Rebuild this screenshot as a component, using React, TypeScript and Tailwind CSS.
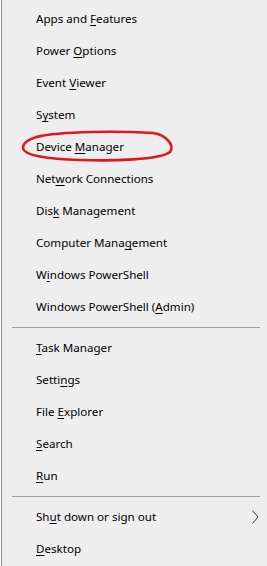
import React from 'react';

type Item = { pre: string; key: string; post: string; submenu?: boolean };

const groups: Item[][] = [
  [
    { pre: 'Apps and ', key: 'F', post: 'eatures' },
    { pre: 'Power ', key: 'O', post: 'ptions' },
    { pre: 'Event ', key: 'V', post: 'iewer' },
    { pre: 'S', key: 'y', post: 'stem' },
    { pre: 'Device ', key: 'M', post: 'anager' },
    { pre: 'Net', key: 'w', post: 'ork Connections' },
    { pre: 'Dis', key: 'k', post: ' Management' },
    { pre: 'Computer Mana', key: 'g', post: 'ement' },
    { pre: 'W', key: 'i', post: 'ndows PowerShell' },
    { pre: 'Windows PowerShell (', key: 'A', post: 'dmin)' },
  ],
  [
    { pre: '', key: 'T', post: 'ask Manager' },
    { pre: 'Setti', key: 'n', post: 'gs' },
    { pre: 'File ', key: 'E', post: 'xplorer' },
    { pre: '', key: 'S', post: 'earch' },
    { pre: '', key: 'R', post: 'un' },
  ],
  [
    { pre: 'Sh', key: 'u', post: 't down or sign out', submenu: true },
    { pre: '', key: 'D', post: 'esktop' },
  ],
];

function MenuRow({ item }: { item: Item }) {
  return (
    <div className="h-8 flex items-center pl-[34px] pr-[8px] text-[11.6px] text-black">
      <span className="flex-1">
        {item.pre}
        <span className="underline underline-offset-[2px] decoration-1">{item.key}</span>
        {item.post}
      </span>
      {item.submenu && (
        <svg width="7" height="14" viewBox="0 0 7 14" className="text-[#333]">
          <polyline points="0.5,0.5 6,7 0.5,13.5" fill="none" stroke="currentColor" strokeWidth="1" />
        </svg>
      )}
    </div>
  );
}

export default function App() {
  return (
    <div
      className="relative w-[267px] h-[566px] bg-white pl-px overflow-hidden"
      style={{ fontFamily: '"Noto Sans", "Segoe UI", sans-serif' }}
    >
      <div className="h-full border-l border-[#8c8c8c] bg-[#eeeeee] pt-[3px]">
        {groups.map((g, gi) => (
          <div key={gi}>
            {gi > 0 && (
              <div className="h-[9px] flex items-center ml-[10px] mr-[7px]">
                <div className="h-px w-full bg-[#a0a0a0]" />
              </div>
            )}
            {g.map((item, i) => (
              <MenuRow key={i} item={item} />
            ))}
          </div>
        ))}
      </div>

      {/* red annotation around Device Manager */}
      <svg
        className="absolute left-0 top-0 pointer-events-none"
        width="267"
        height="566"
        viewBox="0 0 267 566"
      >
        <path
          d="M36 137 C62 131 118 131 153 133 C166 135 175 145 170 152 C160 160 112 161 80 160 C50 159 22 156 23 147 C24 141 31 138 42 136"
          fill="none"
          stroke="#e3161b"
          strokeWidth="2.6"
          strokeLinecap="round"
        />
      </svg>
    </div>
  );
}
